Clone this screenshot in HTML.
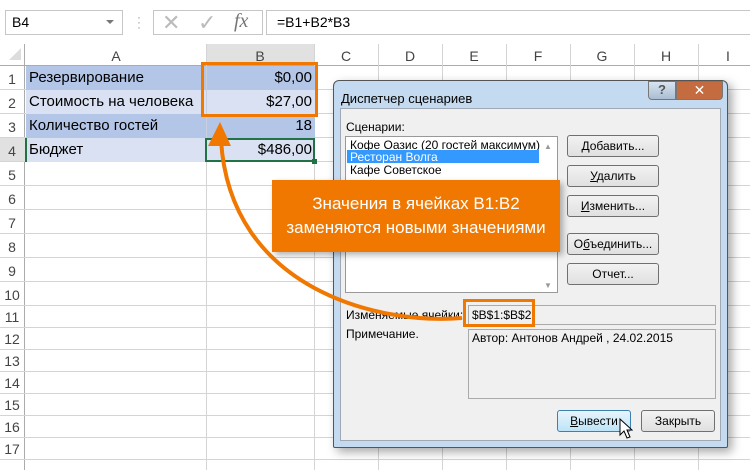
<!DOCTYPE html>
<html><head><meta charset="utf-8"><style>
*{margin:0;padding:0;box-sizing:border-box}
body{width:750px;height:470px;background:#fff;position:relative;overflow:hidden;font-family:"Liberation Sans","DejaVu Sans",sans-serif}
.a{position:absolute}
.t{font-size:15px;color:#000}
.d{font-family:"Liberation Sans",sans-serif;font-size:12px;color:#000;white-space:nowrap}
.btn{position:absolute;width:92px;height:22px;border:1px solid #707070;border-radius:3px;background:linear-gradient(#f2f2f2,#e0e0e0);font-family:"Liberation Sans",sans-serif;font-size:12px;text-align:center;line-height:20px}
</style></head><body>
<div class="a" style="left:5px;top:10px;width:118px;height:25px;border:1px solid #c6c6c6;font-size:14px;line-height:23px;padding-left:6px">B4<span style="position:absolute;right:8px;top:9px;border:4px solid transparent;border-top:4px solid #777"></span></div>
<div class="a" style="left:137px;top:15px;color:#999;font-size:12px;line-height:5px">·<br>·<br>·</div>
<div class="a" style="left:153px;top:10px;width:110px;height:25px;border:1px solid #c6c6c6"></div>
<div class="a" style="left:162px;top:10px;font-size:22px;color:#bbb">✕</div>
<div class="a" style="left:198px;top:10px;font-size:22px;color:#bbb">✓</div>
<div class="a" style="left:234px;top:10px;font-size:20px;color:#777;font-style:italic;font-family:'Liberation Serif',serif">fx</div>
<div class="a" style="left:266px;top:10px;width:490px;height:25px;border:1px solid #c6c6c6;font-size:14px;line-height:23px;padding-left:10px">=B1+B2*B3</div>
<div class="a" style="left:0;top:44px;width:750px;height:22px;background:#fff;border-bottom:1px solid #ababab"></div>
<div class="a" style="left:206px;top:44px;width:108px;height:22px;background:#e1e1e1;border-bottom:2px solid #ababab"></div>
<div class="a" style="left:0;top:44px;width:25px;height:426px;border-right:1px solid #ababab"></div>
<div class="a" style="left:0;top:138px;width:25px;height:24px;background:#e1e1e1"></div>
<div class="a" style="left:9px;top:48px;border:6px solid transparent;border-right-color:#ddd;border-bottom-color:#ddd"></div>
<svg class="a" style="left:0;top:44px" width="750" height="426">
<g stroke="#d4d4d4" stroke-width="1">
<path d="M206.5 0V426M314.5 0V426M378.5 0V426M442.5 0V426M506.5 0V426M570.5 0V426M634.5 0V426M698.5 0V426"/>
<path d="M0 45.5H750M0 69.5H750M0 93.5H750M0 117.5H750M0 141.5H750M0 165.5H750M0 189.5H750M0 213.5H750M0 237.5H750M0 261.5H750M0 283.5H750M0 305.5H750M0 327.5H750M0 349.5H750M0 371.5H750M0 393.5H750M0 415.5H750"/>
</g>
<g font-size="14" fill="#444" text-anchor="middle" font-family="Liberation Sans">
<text x="116" y="17">A</text><text x="260" y="17">B</text><text x="346" y="17">C</text><text x="410" y="17">D</text><text x="474" y="17">E</text><text x="538" y="17">F</text><text x="602" y="17">G</text><text x="666" y="17">H</text><text x="728" y="17">I</text>
<text x="12" y="40">1</text><text x="12" y="64">2</text><text x="12" y="88">3</text><text x="12" y="112">4</text><text x="12" y="136">5</text><text x="12" y="160">6</text><text x="12" y="184">7</text><text x="12" y="208">8</text><text x="12" y="232">9</text><text x="12" y="256">10</text><text x="12" y="278">11</text><text x="12" y="300">12</text><text x="12" y="322">13</text><text x="12" y="344">14</text><text x="12" y="366">15</text><text x="12" y="388">16</text><text x="12" y="410">17</text>
</g>
</svg>
<div class="a" style="left:26px;top:66px;width:289px;height:24px;background:#b4c6e7"></div>
<div class="a" style="left:26px;top:90px;width:289px;height:24px;background:#d9e1f2"></div>
<div class="a" style="left:26px;top:114px;width:289px;height:24px;background:#b4c6e7"></div>
<div class="a" style="left:26px;top:138px;width:289px;height:24px;background:#d9e1f2"></div>
<div class="a" style="left:206px;top:66px;width:1px;height:96px;background:#c8d0e0"></div>
<div class="a t" style="left:29px;top:69px">Резервирование</div>
<div class="a t" style="left:29px;top:93px">Стоимость на человека</div>
<div class="a t" style="left:29px;top:117px">Количество гостей</div>
<div class="a t" style="left:29px;top:141px">Бюджет</div>
<div class="a t" style="left:206px;width:106px;text-align:right;top:69px">$0,00</div>
<div class="a t" style="left:206px;width:106px;text-align:right;top:93px">$27,00</div>
<div class="a t" style="left:206px;width:106px;text-align:right;top:117px">18</div>
<div class="a t" style="left:206px;width:106px;text-align:right;top:141px">$486,00</div>
<div class="a" style="left:25px;top:138px;width:2px;height:24px;background:#217346"></div>
<div class="a" style="left:205px;top:138px;width:110px;height:24px;border:2px solid #217346"></div>
<div class="a" style="left:312px;top:159px;width:5px;height:5px;background:#217346"></div>
<div class="a" style="left:201px;top:62px;width:117px;height:55px;border:3px solid #f07800"></div>
<div class="a" style="left:333px;top:80px;width:395px;height:368px;border:1px solid #555;border-radius:6px 6px 2px 2px;background:#c4daf0;box-shadow:4px 4px 10px rgba(0,0,0,.35)"></div>
<div class="a d" style="left:341px;top:91px;font-size:13px">Диспетчер сценариев</div>
<div class="a" style="left:648px;top:81px;width:28px;height:19px;border:1px solid #777;border-radius:0 0 0 4px;background:linear-gradient(#d8e4f0,#a9bdd2);text-align:center;font-weight:bold;color:#555;font-size:13px">?</div>
<div class="a" style="left:676px;top:81px;width:47px;height:19px;border:1px solid #777;border-radius:0 0 4px 0;background:#c46b3f;text-align:center;color:#fff;font-weight:bold;font-size:14px">✕</div>
<div class="a" style="left:340px;top:108px;width:381px;height:333px;background:#f0f0f0;border:1px solid #a0a8b4"></div>
<div class="a d" style="left:346px;top:120px">Сценарии:</div>
<div class="a" style="left:345px;top:136px;width:213px;height:157px;background:#fff;border:1px solid #999"></div>
<div class="a d" style="left:350px;top:138px">Кофе Оазис (20 гостей максимум)</div>
<div class="a" style="left:347px;top:150px;width:192px;height:13px;background:#3399ff"></div>
<div class="a d" style="left:350px;top:150px;color:#fff">Ресторан Волга</div>
<div class="a d" style="left:350px;top:163px">Кафе Советское</div>
<div class="a" style="left:544px;top:142px;color:#999;font-size:8px">▲</div>
<div class="a" style="left:544px;top:281px;color:#999;font-size:8px">▼</div>
<div class="btn" style="left:567px;top:135px"><u>Д</u>обавить...</div>
<div class="btn" style="left:567px;top:165px"><u>У</u>далить</div>
<div class="btn" style="left:567px;top:195px"><u>И</u>зменить...</div>
<div class="btn" style="left:567px;top:233px">О<u>б</u>ъединить...</div>
<div class="btn" style="left:567px;top:263px">Отчет...</div>
<div class="a d" style="left:346px;top:308px">Изменяемые ячейки:</div>
<div class="a" style="left:468px;top:305px;width:248px;height:20px;border:1px solid #aaa"></div>
<div class="a d" style="left:472px;top:308px">$B$1:$B$2</div>
<div class="a d" style="left:346px;top:327px">Примечание.</div>
<div class="a" style="left:468px;top:329px;width:248px;height:70px;border:1px solid #aaa"></div>
<div class="a d" style="left:472px;top:331px">Автор: Антонов Андрей , 24.02.2015</div>
<div class="btn" style="left:557px;top:410px;width:74px;border-color:#3c7fb1;background:linear-gradient(#e8f4fc,#bde4f8)"><u>В</u>ывести</div>
<div class="btn" style="left:641px;top:410px;width:74px">Закрыть</div>
<svg class="a" style="left:619px;top:418px" width="14" height="22"><path d="M1 1 L1 17 L5 13 L8 20 L11 19 L8 12 L13 12 Z" fill="#fff" stroke="#000" stroke-width="1"/></svg>
<div class="a" style="left:463px;top:299px;width:72px;height:28px;border:3px solid #f07800"></div>
<svg class="a" style="left:0;top:0" width="750" height="470">
<path d="M462 318 C380 325 230 290 221 140" fill="none" stroke="#f07800" stroke-width="4"/>
<path d="M208 146 L220 122 L231 146 Z" fill="#f07800"/>
</svg>
<div class="a" style="left:272px;top:180px;width:288px;height:72px;background:#f07800;box-shadow:3px 3px 6px rgba(0,0,0,.3);color:#fff;text-align:center;font-size:17px;line-height:24px;padding-top:12px">Значения в ячейках B1:B2<br>заменяются новыми значениями</div>
</body></html>
